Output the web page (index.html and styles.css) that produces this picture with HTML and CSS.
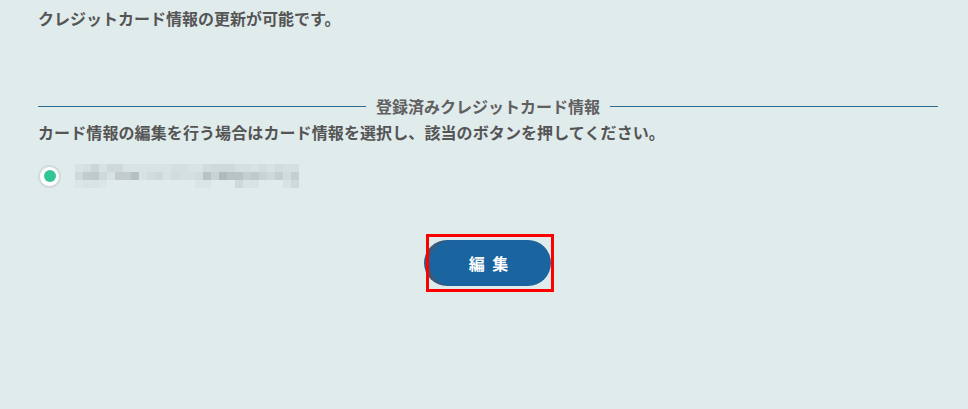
FILE: index.html
```html
<!DOCTYPE html>
<html lang="ja">
<head>
    <meta charset="UTF-8">
    <meta name="viewport" content="width=device-width, initial-scale=1.0">
    <title>クレジットカード情報</title>
    <link rel="stylesheet" href="styles.css">
</head>
<body>
    <div class="container">
        <p class="lead">クレジットカード情報の更新が可能です。</p>

        <div class="section-title"><span>登録済みクレジットカード情報</span></div>
        <p class="note">カード情報の編集を行う場合はカード情報を選択し、該当のボタンを押してください。</p>

        <label class="card-row">
            <input type="radio" name="card" checked>
            <span class="radio-mark"></span>
            <!-- マスク済みカード番号 -->
            <svg class="masked" width="224" height="24" viewBox="0 0 224 24">
                <g fill="#a3aeb2">
                    <rect x="0" y="0" width="8" height="8" fill-opacity=".12"/>
                    <rect x="8" y="0" width="8" height="8" fill-opacity=".2"/>
                    <rect x="16" y="0" width="8" height="8" fill-opacity=".35"/>
                    <rect x="24" y="0" width="8" height="8" fill-opacity=".15"/>
                    <rect x="32" y="0" width="8" height="8" fill-opacity=".3"/>
                    <rect x="40" y="0" width="8" height="8" fill-opacity=".3"/>
                    <rect x="48" y="0" width="8" height="8" fill-opacity=".15"/>
                    <rect x="56" y="0" width="40" height="8" fill-opacity=".12"/>
                    <rect x="96" y="0" width="8" height="8" fill-opacity=".18"/>
                    <rect x="104" y="0" width="8" height="8" fill-opacity=".2"/>
                    <rect x="112" y="0" width="16" height="8" fill-opacity=".12"/>
                    <rect x="128" y="0" width="8" height="8" fill-opacity=".25"/>
                    <rect x="136" y="0" width="8" height="8" fill-opacity=".3"/>
                    <rect x="144" y="0" width="16" height="8" fill-opacity=".28"/>
                    <rect x="160" y="0" width="16" height="8" fill-opacity=".2"/>
                    <rect x="176" y="0" width="8" height="8" fill-opacity=".15"/>
                    <rect x="184" y="0" width="8" height="8" fill-opacity=".22"/>
                    <rect x="192" y="0" width="8" height="8" fill-opacity=".15"/>
                    <rect x="200" y="0" width="8" height="8" fill-opacity=".25"/>
                    <rect x="208" y="0" width="16" height="8" fill-opacity=".2"/>

                    <rect x="0" y="8" width="8" height="8" fill-opacity=".3"/>
                    <rect x="8" y="8" width="8" height="8" fill-opacity=".5"/>
                    <rect x="16" y="8" width="8" height="8" fill-opacity=".55"/>
                    <rect x="24" y="8" width="8" height="8" fill-opacity=".3"/>
                    <rect x="32" y="8" width="8" height="8" fill-opacity=".15"/>
                    <rect x="40" y="8" width="8" height="8" fill-opacity=".5"/>
                    <rect x="48" y="8" width="8" height="8" fill-opacity=".5"/>
                    <rect x="56" y="8" width="8" height="8" fill-opacity=".7"/>
                    <rect x="64" y="8" width="8" height="8" fill-opacity=".15"/>
                    <rect x="72" y="8" width="8" height="8" fill-opacity=".25"/>
                    <rect x="80" y="8" width="8" height="8" fill-opacity=".3"/>
                    <rect x="88" y="8" width="8" height="8" fill-opacity=".15"/>
                    <rect x="96" y="8" width="8" height="8" fill-opacity=".25"/>
                    <rect x="104" y="8" width="16" height="8" fill-opacity=".2"/>
                    <rect x="120" y="8" width="8" height="8" fill-opacity=".25"/>
                    <rect x="128" y="8" width="8" height="8" fill-opacity=".65"/>
                    <rect x="136" y="8" width="8" height="8" fill-opacity=".4"/>
                    <rect x="144" y="8" width="8" height="8" fill-opacity=".8"/>
                    <rect x="152" y="8" width="16" height="8" fill-opacity=".65"/>
                    <rect x="168" y="8" width="8" height="8" fill-opacity=".45"/>
                    <rect x="176" y="8" width="8" height="8" fill-opacity=".55"/>
                    <rect x="184" y="8" width="8" height="8" fill-opacity=".4"/>
                    <rect x="192" y="8" width="8" height="8" fill-opacity=".3"/>
                    <rect x="200" y="8" width="8" height="8" fill-opacity=".45"/>
                    <rect x="208" y="8" width="8" height="8" fill-opacity=".25"/>
                    <rect x="216" y="8" width="8" height="8" fill-opacity=".45"/>

                    <rect x="0" y="16" width="8" height="8" fill-opacity=".08"/>
                    <rect x="8" y="16" width="16" height="8" fill-opacity=".12"/>
                    <rect x="24" y="16" width="8" height="8" fill-opacity=".08"/>
                    <rect x="120" y="16" width="16" height="8" fill-opacity=".1"/>
                    <rect x="160" y="16" width="8" height="8" fill-opacity=".3"/>
                    <rect x="168" y="16" width="16" height="8" fill-opacity=".12"/>
                    <rect x="208" y="16" width="8" height="8" fill-opacity=".12"/>
                    <rect x="216" y="16" width="8" height="8" fill-opacity=".3"/>
                </g>
            </svg>
        </label>

        <div class="actions">
            <div class="btn-focus">
                <button class="btn-edit">編 集</button>
            </div>
        </div>
    </div>
</body>
</html>
```

FILE: styles.css
```css
html, body {
    height: 100%;
}

body {
    margin: 0;
    background: #e0ebec;
    font-family: "Noto Sans CJK JP", "Noto Sans", sans-serif;
    font-weight: bold;
    color: #555;
}

.container {
    width: 900px;
    padding: 8px 0 0 38px;
}

.lead {
    margin: 0;
    font-size: 16px;
    line-height: 20px;
}

.section-title {
    display: flex;
    align-items: center;
    gap: 10px;
    margin-top: 68px;
    font-size: 16px;
    line-height: 20px;
    color: #606060;
}

.section-title::before,
.section-title::after {
    content: "";
    flex: 1;
    height: 1px;
    background: #2c6b92;
}

.note {
    margin: 6px 0 0;
    font-size: 16px;
    line-height: 20px;
    letter-spacing: 0.1px;
}

.card-row {
    display: flex;
    align-items: center;
    gap: 14px;
    height: 24px;
    margin-top: 22px;
}

.card-row input {
    display: none;
}

.radio-mark {
    width: 19px;
    height: 19px;
    border-radius: 50%;
    background: #fff;
    border: 2px solid #d2dadc;
    display: flex;
    align-items: center;
    justify-content: center;
}

.radio-mark::after {
    content: "";
    width: 12px;
    height: 12px;
    border-radius: 50%;
    background: #33c596;
}

.masked {
    display: block;
}

.actions {
    display: flex;
    justify-content: center;
    margin-top: 49px;
    padding-left: 3px;
}

.btn-focus {
    padding: 3px 0;
    outline: 3px solid #f00;
}

.btn-edit {
    display: block;
    width: 122px;
    height: 46px;
    border: none;
    border-radius: 23px;
    background: #1a64a0;
    box-shadow: -5px 0 0 #3c5a78;
    color: #fff;
    font-family: "Noto Sans CJK JP", sans-serif;
    font-weight: bold;
    font-size: 16px;
    letter-spacing: 2px;
}
```
